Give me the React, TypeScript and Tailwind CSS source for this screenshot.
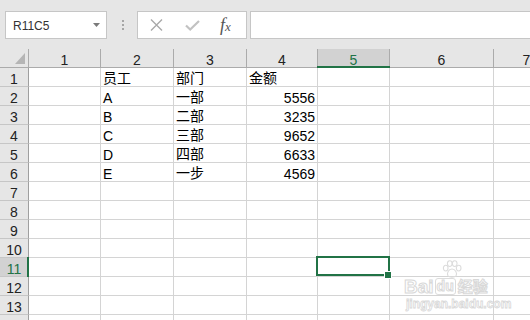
import React from "react";

const COLS = ["1", "2", "3", "4", "5", "6", "7"];

type CellVal = { t: string; num?: boolean; cjk?: boolean };

const DATA: Record<number, Record<number, CellVal>> = {
  1: { 2: { t: "员工", cjk: true }, 3: { t: "部门", cjk: true }, 4: { t: "金额", cjk: true } },
  2: { 2: { t: "A" }, 3: { t: "一部", cjk: true }, 4: { t: "5556", num: true } },
  3: { 2: { t: "B" }, 3: { t: "二部", cjk: true }, 4: { t: "3235", num: true } },
  4: { 2: { t: "C" }, 3: { t: "三部", cjk: true }, 4: { t: "9652", num: true } },
  5: { 2: { t: "D" }, 3: { t: "四部", cjk: true }, 4: { t: "6633", num: true } },
  6: { 2: { t: "E" }, 3: { t: "一步", cjk: true }, 4: { t: "4569", num: true } },
};

const SEL_ROW = 11;
const SEL_COL = 5;

function XIcon() {
  return (
    <svg width="13" height="12" viewBox="0 0 13 12">
      <path d="M1 0.5 L12 11.5 M12 0.5 L1 11.5" stroke="#a9a9a9" strokeWidth="1.4" fill="none" />
    </svg>
  );
}

function CheckIcon() {
  return (
    <svg width="15" height="11" viewBox="0 0 15 11">
      <path d="M1 5.5 L5.2 9.5 L14 1" stroke="#c2c2c2" strokeWidth="2.2" fill="none" />
    </svg>
  );
}

export default function App() {
  const rows = Array.from({ length: 14 }, (_, i) => i + 1);
  return (
    <div className="relative w-[530px] h-[320px] overflow-hidden bg-[#e6e6e6] font-['Liberation_Sans','Noto_Sans_CJK_SC',sans-serif] text-black select-none">
      {/* Toolbar */}
      <div className="h-[49px] flex items-start pt-[11px] pl-[5px]">
        <div className="w-[102px] h-[28px] bg-white border border-[#c6c6c6] flex items-center pl-[7px] pr-[6px]">
          <span className="text-[12px] text-[#333] flex-1 leading-none pt-[1px]">R11C5</span>
          <svg width="7" height="4" viewBox="0 0 7 4">
            <path d="M0 0 L7 0 L3.5 4 Z" fill="#7a7a7a" />
          </svg>
        </div>
        <div className="w-[30px] h-[28px] flex flex-col items-center justify-center gap-[2px] pl-[1px]">
          <div className="w-[2px] h-[2px] bg-[#a6a6a6]" />
          <div className="w-[2px] h-[2px] bg-[#a6a6a6]" />
          <div className="w-[2px] h-[2px] bg-[#a6a6a6]" />
        </div>
        <div className="w-[110px] h-[28px] bg-white border border-[#c6c6c6] flex items-center">
          <div className="ml-[12px] flex items-center">
            <XIcon />
          </div>
          <div className="ml-[22px] flex items-center">
            <CheckIcon />
          </div>
          <div className="ml-[20px] font-['Liberation_Serif',serif] italic text-[#555] text-[18px] leading-none pb-[1px]">
            f<span className="text-[13px]">x</span>
          </div>
        </div>
        <div className="ml-[3px] flex-1 h-[28px] bg-white border border-[#c6c6c6] border-r-0" />
      </div>

      {/* Sheet */}
      <div className="grid grid-cols-[29px_72px_73px_73px_71px_72px_104px_66px] auto-rows-[19px] bg-white">
        {/* Header row */}
        <div className="relative bg-[#e6e6e6] border-r border-b border-[#ababab]">
          <svg className="absolute left-[15px] top-[4px]" width="10" height="11" viewBox="0 0 10 11">
            <path d="M10 0 L10 11 L0 11 Z" fill="#b5b5b5" />
          </svg>
        </div>
        {COLS.map((c, i) => {
          const sel = i + 1 === SEL_COL;
          return (
            <div
              key={c}
              className={
                sel
                  ? "relative bg-[#d2d2d2] border-r border-b border-[#ababab] flex items-end justify-center leading-[12px] text-[14px] text-[#217346] pb-[1px]"
                  : "bg-[#e6e6e6] border-r border-b border-[#ababab] flex items-end justify-center leading-[12px] text-[14px] text-[#222] pb-[1px]"
              }
            >
              {c}
              {sel && <div className="absolute left-[-1px] right-[-1px] bottom-[-1px] h-[2px] bg-[#217346]" />}
            </div>
          );
        })}
        {/* Body rows */}
        {rows.map((r) => {
          const selRow = r === SEL_ROW;
          return (
            <React.Fragment key={r}>
              <div
                className={
                  selRow
                    ? "relative bg-[#d2d2d2] border-r border-b border-r-[#9f9f9f] border-b-[#c6c6c6] flex items-end justify-center leading-[12px] text-[14px] text-[#217346] pb-[1px]"
                    : "bg-[#e6e6e6] border-r border-b border-r-[#9f9f9f] border-b-[#c6c6c6] flex items-end justify-center leading-[12px] text-[14px] text-[#222] pb-[1px]"
                }
              >
                {r <= 13 ? r : null}
                {selRow && <div className="absolute top-[-1px] bottom-[-1px] right-[-1px] w-[2px] bg-[#217346]" />}
              </div>
              {COLS.map((_, ci) => {
                const col = ci + 1;
                const v = DATA[r]?.[col];
                const isSel = selRow && col === SEL_COL;
                return (
                  <div
                    key={col}
                    className={
                      "relative border-r border-b border-[#d4d4d4] flex items-end leading-[12px] text-[14px] px-[2px] " +
                      (v?.num ? "justify-end pb-[1px]" : v?.cjk ? "justify-start pb-[2px]" : "justify-start pb-[1px]")
                    }
                  >
                    {v?.t}
                    {isSel && (
                      <>
                        <div className="absolute left-[-2px] top-[-2px] right-[-1px] bottom-0 border-2 border-[#217346] z-10" />
                        <div className="absolute right-[-3px] bottom-[-3px] w-[8px] h-[8px] bg-[#217346] border border-white z-20" />
                      </>
                    )}
                  </div>
                );
              })}
            </React.Fragment>
          );
        })}
      </div>

      {/* Watermark */}
      <div className="absolute left-[404px] top-[260px] w-[100px] flex flex-col items-start pointer-events-none z-30">
        <svg className="ml-[37px]" width="22" height="18" viewBox="0 0 22 20">
          <g fill="none" stroke="#dcdcdc" strokeWidth="1.2">
            <ellipse cx="4" cy="9" rx="2.6" ry="3.2" />
            <ellipse cx="8.5" cy="4" rx="2.6" ry="3.2" />
            <ellipse cx="14" cy="4" rx="2.6" ry="3.2" />
            <ellipse cx="18.4" cy="9" rx="2.6" ry="3.2" />
            <path d="M11 10 C7 10 5 15 6.5 17.5 C8 19.5 14 19.5 15.5 17.5 C17 15 15 10 11 10 Z" />
          </g>
        </svg>
        <div className="flex items-end font-bold leading-[16px] text-white [-webkit-text-stroke:1px_#d8d8d8]">
          <span className="text-[19px]">Bai</span>
          <span className="ml-[1px] text-[14px] leading-[15px] px-[1px] border border-[#dcdcdc] rounded-[3px]">du</span>
          <span className="ml-[2px] text-[15px]">经验</span>
        </div>
        <div className="mt-[3px] ml-[2px] text-[12px] font-bold leading-none text-white [-webkit-text-stroke:0.8px_#d8d8d8]">
          jingyan.baidu.com
        </div>
      </div>
    </div>
  );
}
